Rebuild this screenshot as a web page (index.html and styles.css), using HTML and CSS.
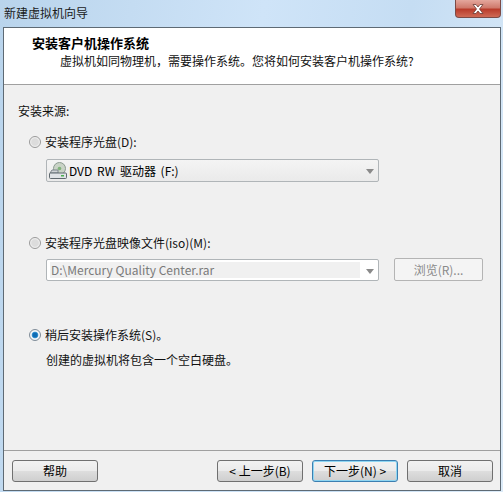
FILE: index.html
```html
<!DOCTYPE html>
<html lang="zh-CN">
<head>
  <meta charset="UTF-8" />
  <title>新建虚拟机向导</title>
  <link rel="stylesheet" href="styles.css">
</head>
<body>
  <div class="window">
    <div class="titlebar">
      <span class="title">新建虚拟机向导</span>
      <div class="close">
        <svg width="18" height="12" viewBox="0 0 18 12">
          <path d="M4 1.500h3l2 2.500 2-2.500h3l-3.500 4.500 3.500 4.500h-3l-2-2.500-2 2.500h-3l3.500-4.500z" fill="#fff" stroke="#6b3a34" stroke-width="0.8" />
        </svg>
      </div>
    </div>

    <div class="client">
      <div class="header">
        <h1>安装客户机操作系统</h1>
        <p>虚拟机如同物理机，需要操作系统。您将如何安装客户机操作系统?</p>
      </div>

      <div class="content">
        <div class="source-label">安装来源:</div>

        <div class="option option-disc">
          <span class="radio"></span>
          <span>安装程序光盘(D):</span>
        </div>
        <div class="field-row field-disc">
          <div class="combo combo-disc">
            <svg class="drive-icon" width="20" height="18" viewBox="0 0 20 18">
              <circle cx="11.500" cy="6.500" r="6" fill="#c9d3c6" stroke="#8b9a90" />
              <circle cx="11.500" cy="6.500" r="1.800" fill="#7fb27a" />
              <path d="M2 11l2-3h6v3z" fill="#cfd3d6" stroke="#7d868c" />
              <rect x="1.500" y="11" width="17" height="5.500" rx="1" fill="#dfe3e6" stroke="#5f686e" />
              <rect x="13" y="13" width="3" height="1.500" fill="#4caf50" />
            </svg>
            <span class="combo-text">DVD RW 驱动器 (F:)</span>
            <span class="arrow"></span>
          </div>
        </div>

        <div class="option option-iso">
          <span class="radio"></span>
          <span>安装程序光盘映像文件(iso)(M):</span>
        </div>
        <div class="field-row field-iso">
          <div class="combo combo-iso">
            <span class="combo-value">D:\Mercury Quality Center.rar</span>
            <span class="arrow"></span>
          </div>
          <div class="browse">浏览(R)...</div>
        </div>

        <div class="option option-later">
          <span class="radio radio-on"></span>
          <span>稍后安装操作系统(S)。</span>
        </div>
        <p class="note">创建的虚拟机将包含一个空白硬盘。</p>
      </div>

      <div class="footer">
        <div class="btn">帮助</div>
        <div class="footer-right">
          <div class="btn">&lt; 上一步(B)</div>
          <div class="btn btn-default">下一步(N) &gt;</div>
          <div class="btn">取消</div>
        </div>
      </div>
    </div>
  </div>
</body>
</html>
```

FILE: styles.css
```css
html, body {
  margin: 0;
  height: 100%;
}

body {
  font-family: "Noto Sans CJK SC", "Liberation Sans", sans-serif;
  font-size: 12px;
  color: #111;
  overflow: hidden;
}

.window {
  width: 503px;
  height: 492px;
  box-sizing: border-box;
  padding: 0 2px 1px 3px;
  display: flex;
  flex-direction: column;
  background: linear-gradient(100deg, #b9d4ec 0%, #cfe4f8 45%, #c5ddf3 70%, #dcebf8 100%);
}

.titlebar {
  height: 27px;
  flex: none;
  display: flex;
  justify-content: space-between;
  align-items: flex-start;
}

.title {
  margin: 4px 0 0 1px;
  line-height: 18px;
  color: #1a1a1a;
}

.close {
  width: 46px;
  height: 18px;
  box-sizing: border-box;
  display: flex;
  align-items: center;
  justify-content: center;
  border: 1px solid #7c4a45;
  border-top: none;
  border-radius: 0 0 4px 4px;
  background: linear-gradient(#e4a79d 0%, #cf7a6c 45%, #b93c2b 55%, #cf6a55 100%);
}

.client {
  flex: 1;
  display: flex;
  flex-direction: column;
  border: 1px solid #5e6a74;
  background: #f0f0f0;
}

.header {
  height: 56px;
  flex: none;
  background: #fff;
  border-bottom: 1px solid #a0a0a0;
}

.header h1 {
  margin: 6px 0 0 28px;
  font-size: 13px;
  line-height: 18px;
  font-weight: bold;
  color: #000;
}

.header p {
  margin: 0 0 0 56px;
  line-height: 18px;
}

.content {
  flex: 1;
  padding: 17px 0 0 14px;
}

.source-label {
  line-height: 18px;
}

.option {
  display: flex;
  align-items: center;
  gap: 4px;
  margin-left: 11px;
  line-height: 18px;
}

.option-disc {
  margin-top: 13px;
}

.option-iso {
  margin-top: 52px;
}

.option-later {
  margin-top: 45px;
}

.radio {
  width: 12px;
  height: 12px;
  box-sizing: border-box;
  border: 1px solid #9a9a9a;
  border-radius: 50%;
  background: radial-gradient(circle, #dcdcdc 0 45%, #f4f4f4 70%);
}

.radio-on {
  border-color: #7f8c98;
  background: radial-gradient(circle, #0f6cb4 0 28%, #3f9ad6 42%, #f2f5f8 52%);
}

.field-row {
  display: flex;
  gap: 15px;
  margin-left: 28px;
}

.field-disc {
  margin-top: 8px;
}

.field-iso {
  margin-top: 7px;
}

.combo {
  width: 333px;
  box-sizing: border-box;
  display: flex;
  align-items: center;
  border: 1px solid #b0b5b8;
  border-radius: 2px;
  position: relative;
}

.combo-disc {
  height: 23px;
  padding-left: 1px;
  background: linear-gradient(#f4f4f4, #eaeaea);
}

.combo-iso {
  height: 22px;
  padding: 2px 18px 2px 3px;
  background: #fff;
}

.drive-icon {
  flex: none;
}

.combo-text {
  margin-left: 1px;
  word-spacing: 2px;
  color: #000;
}

.combo-value {
  flex: 1;
  height: 16px;
  line-height: 16px;
  padding-left: 1px;
  color: #7a7a7a;
  background: #f0f0f0;
}

.arrow {
  position: absolute;
  right: 4px;
  top: 9px;
  border: 4px solid transparent;
  border-top: 5px solid #8a8a8a;
  border-bottom: none;
}

.browse {
  width: 89px;
  height: 23px;
  box-sizing: border-box;
  margin-top: -1px;
  border: 1px solid #b4b4b4;
  border-radius: 2px;
  line-height: 21px;
  text-align: center;
  color: #8a8a8a;
  background: #f4f4f4;
}

.note {
  margin: 7px 0 0 28px;
  line-height: 18px;
}

.footer {
  height: 30px;
  flex: none;
  border-top: 1px solid #a0a0a0;
  padding: 9px 7px 0 8px;
  display: flex;
  justify-content: space-between;
  align-items: flex-start;
}

.footer-right {
  display: flex;
  gap: 9px;
}

.btn {
  width: 86px;
  height: 22px;
  box-sizing: border-box;
  border: 1px solid #707070;
  border-radius: 3px;
  line-height: 20px;
  text-align: center;
  color: #000;
  background: linear-gradient(#f2f2f2 0%, #ebebeb 48%, #dddddd 52%, #cfcfcf 100%);
}

.btn-default {
  border-color: #3c7fb1;
  box-shadow: inset 0 0 0 1px #8fd6f2;
}
```
